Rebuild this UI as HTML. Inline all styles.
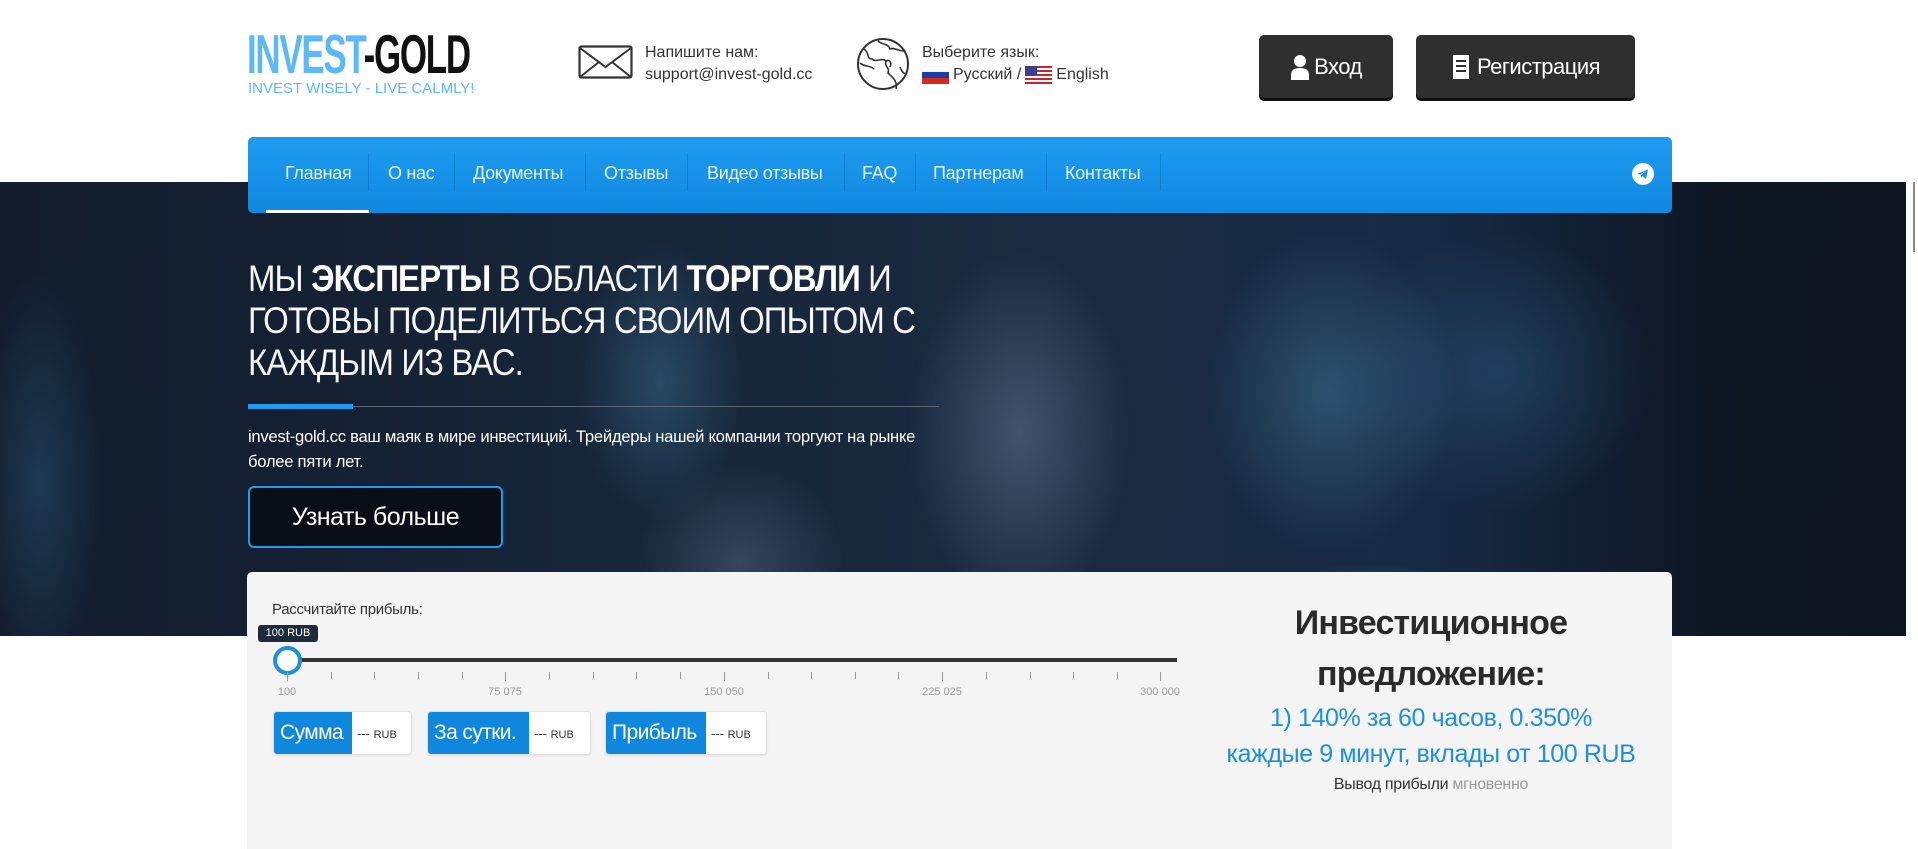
<!DOCTYPE html>
<html><head><meta charset="utf-8">
<style>
*{margin:0;padding:0;box-sizing:border-box}
body{width:1918px;height:849px;overflow:hidden;background:#fff;font-family:"Liberation Sans",sans-serif;position:relative}
.a{position:absolute;white-space:nowrap}
.hero{position:absolute;left:0;top:182px;width:1906px;height:454px;overflow:hidden;
background:
radial-gradient(ellipse 180px 230px at 1330px 210px,rgba(70,130,160,.45),transparent 70%),
radial-gradient(ellipse 220px 200px at 1500px 190px,rgba(50,110,150,.35),transparent 70%),
radial-gradient(ellipse 160px 70px at 1370px 430px,rgba(60,120,180,.6),transparent 70%),
radial-gradient(ellipse 160px 260px at 1020px 250px,rgba(140,160,190,.35),transparent 70%),
radial-gradient(ellipse 120px 200px at 660px 200px,rgba(70,140,180,.35),transparent 70%),
radial-gradient(ellipse 150px 140px at 740px 380px,rgba(120,140,170,.3),transparent 70%),
radial-gradient(ellipse 90px 300px at 40px 300px,rgba(50,110,150,.35),transparent 70%),
linear-gradient(90deg,#121c2c 0%,#172538 30%,#1a2a40 55%,#172a44 75%,#0e1623 90%,#0e1520 100%)}
.nav{position:absolute;left:248px;top:137px;width:1424px;height:76px;border-radius:5px;background:linear-gradient(#1e9bf1,#0f89df)}
.nav span{position:absolute;top:26px;color:#e8f4ff;font-size:18px;font-weight:300;letter-spacing:-.3px}
.sep{position:absolute;top:16px;width:1px;height:38px;background:rgba(0,70,140,.25)}
.btn{position:absolute;top:35px;height:63px;background:#2f2f2f;border-radius:5px;box-shadow:0 3px 0 #111;color:#fff;font-size:22px;display:flex;align-items:center;justify-content:center;letter-spacing:-.5px}
h1{position:absolute;left:248px;top:258px;color:#f4f6f8;font-weight:300;font-size:37px;line-height:42px;letter-spacing:-1px;transform:scaleX(.89);transform-origin:left top}
h1 b{font-weight:700;color:#fff}
.box{position:absolute;top:711px;height:44px;background:#fff;border:1px solid #e2e2e2;border-radius:4px;display:flex;align-items:center;box-shadow:0 1px 2px rgba(0,0,0,.08)}
.box .l{background:#0f87dd;color:#fff;height:100%;display:flex;align-items:center;padding:0 6px;font-size:21px;border-radius:3px 0 0 3px;letter-spacing:-.6px}
.box .r{font-size:13px;color:#333;padding-left:5px}
.tick{position:absolute;top:672px;width:1px;height:7px;background:#999}
.lbl{position:absolute;top:686px;font-size:11px;color:#999;transform:translateX(-50%)}
</style></head><body>
<div class="a" style="left:247px;top:24px;font-size:55px;font-weight:700;letter-spacing:-2px;transform:scaleX(.635);transform-origin:left top;line-height:60px"><span style="color:#5cb8f6">INVEST</span><span style="color:#111">-GOLD</span></div>
<div class="a" style="left:248px;top:80px;font-size:15px;color:#5cb8f6">INVEST WISELY - LIVE CALMLY!</div>
<svg class="a" style="left:578px;top:45px" width="55" height="34" viewBox="0 0 55 34"><rect x="1.5" y="1.5" width="52" height="31" rx="2" fill="none" stroke="#333" stroke-width="2.2"/><path d="M2 3 L27.5 22 L53 3 M2 32 L21 17 M53 32 L34 17" fill="none" stroke="#333" stroke-width="2"/></svg>
<div class="a" style="left:645px;top:44px;font-size:16px;color:#333">Напишите нам:</div>
<div class="a" style="left:645px;top:66px;font-size:16px;color:#333">support@invest-gold.cc</div>
<svg class="a" style="left:856px;top:37px" width="54" height="54" viewBox="0 0 54 54"><circle cx="27" cy="27" r="25" fill="none" stroke="#333" stroke-width="2"/><path d="M8 12 C14 16 10 22 16 22 C20 26 26 20 30 24 C28 30 34 30 32 36 C36 40 42 44 40 52 M22 4 C26 8 32 6 34 12 C38 10 42 14 48 14 M30 24 C34 22 36 26 34 30 M4 26 C8 30 14 28 18 32 M44 30 C46 36 50 38 51 36" fill="none" stroke="#333" stroke-width="1.6"/></svg>
<div class="a" style="left:922px;top:44px;font-size:16px;color:#333">Выберите язык:</div>
<div class="a" style="left:922px;top:66px;font-size:16px;color:#333;display:flex;align-items:center;gap:4px">
<svg width="27" height="18" viewBox="0 0 27 18"><rect width="27" height="6" fill="#fff" stroke="#ddd" stroke-width=".5"/><rect y="6" width="27" height="6" fill="#1c3ea8"/><rect y="12" width="27" height="6" fill="#d52b1e"/></svg>
<span>Русский /</span>
<svg width="27" height="18" viewBox="0 0 27 18"><rect width="27" height="18" fill="#fff"/><g fill="#c9262c"><rect y="0" width="27" height="2"/><rect y="4" width="27" height="2"/><rect y="8" width="27" height="2"/><rect y="12" width="27" height="2"/><rect y="16" width="27" height="2"/></g><rect width="12" height="10" fill="#3b3f8c"/></svg>
<span>English</span></div>
<div class="btn" style="left:1259px;width:134px"><svg width="20" height="26" viewBox="0 0 20 26" style="margin-right:4px"><circle cx="10" cy="7" r="6" fill="#fff"/><path d="M1 26 L1 20 C1 16 5 14 10 14 C15 14 19 16 19 20 L19 26Z" fill="#fff"/></svg>Вход</div>
<div class="btn" style="left:1416px;width:219px"><svg width="20" height="26" viewBox="0 0 20 26" style="margin-right:6px"><path d="M2 1 L18 1 L18 25 L2 25Z" fill="#fff"/><rect x="5" y="6" width="10" height="2" fill="#2f2f2f"/><rect x="5" y="11" width="10" height="2" fill="#2f2f2f"/><rect x="5" y="16" width="10" height="2" fill="#2f2f2f"/></svg>Регистрация</div>
<div class="hero"></div>
<div class="a" style="left:1906px;top:0;width:12px;height:849px;background:#fff"></div>
<div class="a" style="left:1913px;top:182px;width:2px;height:70px;background:#888"></div>
<div class="nav">
<span style="left:37px">Главная</span><div class="sep" style="left:120px"></div>
<span style="left:140px">О нас</span><div class="sep" style="left:206px"></div>
<span style="left:225px">Документы</span><div class="sep" style="left:337px"></div>
<span style="left:356px">Отзывы</span><div class="sep" style="left:439px"></div>
<span style="left:459px">Видео отзывы</span><div class="sep" style="left:596px"></div>
<span style="left:614px">FAQ</span><div class="sep" style="left:667px"></div>
<span style="left:685px">Партнерам</span><div class="sep" style="left:798px"></div>
<span style="left:817px">Контакты</span><div class="sep" style="left:912px"></div>
<div class="a" style="left:18px;top:73px;width:103px;height:3px;background:#fff"></div>
<svg class="a" style="left:1384px;top:26px" width="22" height="22" viewBox="0 0 22 22"><circle cx="11" cy="11" r="11" fill="#fff"/><path d="M5 11 L16 6.5 L14 16 L10.5 13 L9 15 L9 12 L14 8 L8 11.5Z" fill="#1590e6"/></svg>
</div>
<h1>МЫ <b>ЭКСПЕРТЫ</b> В ОБЛАСТИ <b>ТОРГОВЛИ</b> И<br>ГОТОВЫ ПОДЕЛИТЬСЯ СВОИМ ОПЫТОМ С<br>КАЖДЫМ ИЗ ВАС.</h1>
<div class="a" style="left:248px;top:406px;width:691px;height:1px;background:#5d6775"></div>
<div class="a" style="left:248px;top:404px;width:105px;height:5px;background:#1e9bf1"></div>
<div class="a" style="left:248px;top:424px;color:#fff;font-size:17px;line-height:25px;letter-spacing:-.3px;transform:scaleX(.98);transform-origin:left top">invest-gold.cc ваш маяк в мире инвестиций. Трейдеры нашей компании торгуют на рынке<br>более пяти лет.</div>
<div class="a" style="left:248px;top:486px;width:255px;height:62px;border:2px solid #1e9bf1;border-radius:6px;background:#0a0f17;color:#fff;font-size:25px;display:flex;align-items:center;justify-content:center;letter-spacing:-.5px">Узнать больше</div>
<div class="a" style="left:247px;top:572px;width:1425px;height:277px;background:#f4f4f4;border-radius:5px 5px 0 0"></div>
<div class="a" style="left:272px;top:601px;font-size:15px;color:#333;letter-spacing:-.3px">Рассчитайте прибыль:</div>
<div class="a" style="left:258px;top:625px;width:60px;height:17px;background:#1f2b3c;border-radius:3px;color:#fff;font-size:11px;text-align:center;line-height:17px">100 RUB</div>
<div class="a" style="left:287px;top:658px;width:890px;height:4px;background:#333"></div>
<div class="a" style="left:273px;top:646px;width:29px;height:29px;border-radius:50%;background:#fff;border:4px solid #1e8fe0"></div>
<div class="tick" style="left:287px;height:9px"></div><div class="tick" style="left:331px"></div><div class="tick" style="left:374px"></div><div class="tick" style="left:418px"></div><div class="tick" style="left:462px"></div><div class="tick" style="left:505px;height:9px"></div><div class="tick" style="left:549px"></div><div class="tick" style="left:593px"></div><div class="tick" style="left:636px"></div><div class="tick" style="left:680px"></div><div class="tick" style="left:724px;height:9px"></div><div class="tick" style="left:768px"></div><div class="tick" style="left:811px"></div><div class="tick" style="left:855px"></div><div class="tick" style="left:898px"></div><div class="tick" style="left:942px;height:9px"></div><div class="tick" style="left:986px"></div><div class="tick" style="left:1030px"></div><div class="tick" style="left:1073px"></div><div class="tick" style="left:1117px"></div><div class="tick" style="left:1160px;height:9px"></div>
<div class="lbl" style="left:287px">100</div><div class="lbl" style="left:505px">75 075</div><div class="lbl" style="left:724px">150 050</div><div class="lbl" style="left:942px">225 025</div><div class="lbl" style="left:1160px">300 000</div>
<div class="box" style="left:273px;width:139px"><div class="l" style="width:78px">Сумма</div><div class="r">--- <small style="font-size:11px">RUB</small></div></div>
<div class="box" style="left:427px;width:164px"><div class="l" style="width:101px">За сутки.</div><div class="r">--- <small style="font-size:11px">RUB</small></div></div>
<div class="box" style="left:605px;width:162px"><div class="l" style="width:100px">Прибыль</div><div class="r">--- <small style="font-size:11px">RUB</small></div></div>
<div class="a" style="left:1431px;top:598px;transform:translateX(-50%);font-size:34px;font-weight:700;color:#2a2a2a;text-align:center;line-height:51px;letter-spacing:-.8px">Инвестиционное<br>предложение:</div>
<div class="a" style="left:1431px;top:700px;transform:translateX(-50%);font-size:25px;color:#1e8fe0;text-align:center;line-height:36px;letter-spacing:-.4px">1) 140% за 60 часов, 0.350%<br>каждые 9 минут, вклады от 100 RUB</div>
<div class="a" style="left:1431px;top:776px;transform:translateX(-50%);font-size:16px;color:#333;letter-spacing:-.3px">Вывод прибыли <span style="color:#999">мгновенно</span></div>
</body></html>
